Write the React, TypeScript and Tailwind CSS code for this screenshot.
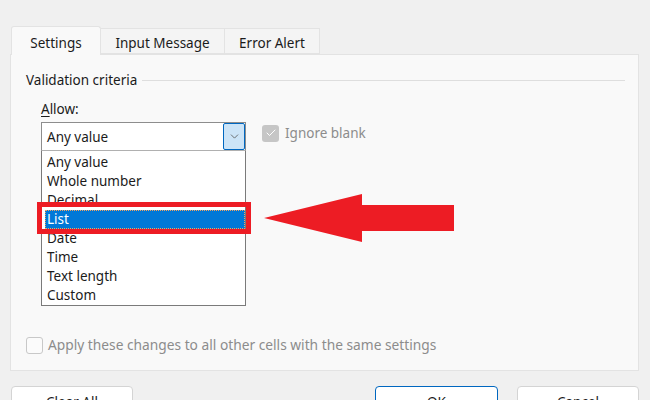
import { Check, ChevronDown } from "lucide-react";

const options = ["Any value", "Whole number", "Decimal", "List", "Date", "Time", "Text length", "Custom"];

export default function App() {
  return (
    <div
      className="relative w-[650px] h-[400px] overflow-hidden bg-[#f0f0f0] pl-[10px] pr-[11px] pt-[26px] text-[13.5px] text-[#1b1b1b]"
      style={{ fontFamily: '"Noto Sans", "Liberation Sans", sans-serif' }}
    >
      {/* tabs */}
      <div className="flex items-end h-[28px] ml-[1px]">
        <div className="relative z-10 -mb-px w-[90px] h-[29px] pt-[6px] text-center leading-[20px] bg-[#f9f9f9] border border-b-0 border-[#e3e3e3] rounded-t-[3px]">
          Settings
        </div>
        <div className="w-[124px] h-[26px] pt-[4px] text-center leading-[20px] bg-[#f4f4f4] border border-l-0 border-[#e3e3e3]">
          Input Message
        </div>
        <div className="w-[95px] h-[26px] pt-[4px] text-center leading-[20px] bg-[#f4f4f4] border border-l-0 border-[#e3e3e3]">
          Error Alert
        </div>
      </div>

      {/* panel */}
      <div className="flex flex-col h-[317px] bg-[#f9f9f9] border border-[#e3e3e3] pl-[15px] pt-[15px] pb-[15px]">
        <div className="flex items-center leading-[20px]">
          <span>Validation criteria</span>
          <div className="flex-1 h-px bg-[#dedede] ml-[5px] mr-[13px]" />
        </div>

        <div className="ml-[15px] mt-[9px] leading-[20px]">
          <span className="underline underline-offset-2">A</span>llow:
        </div>

        <div className="flex items-start ml-[15px] mt-[3px]">
          <div className="w-[205px]">
            <div className="flex items-center h-[29px] bg-white border border-[#8d8d8d] border-b-[#b0b0b0]">
              <span className="flex-1 pl-[5px] pt-px leading-[20px]">Any value</span>
              <div className="flex items-center justify-center w-[22px] h-[27px] bg-[#cce4f7] border border-[#0067c0] rounded-[2px]">
                <ChevronDown size={13} strokeWidth={1.5} className="text-[#555]" />
              </div>
            </div>
            <div className="bg-white border border-t-0 border-[#7a7a7a] pt-[2px]">
              {options.map((o) =>
                o === "List" ? (
                  <div key={o} className="relative ml-[3px] h-[19px] pl-[2px] leading-[19px] bg-[#0078d7] text-white outline-1 outline-dotted outline-[#f4a460] -outline-offset-1">
                    {o}
                    <div className="absolute -left-[8px] -right-[6px] -top-[8px] -bottom-[5px] border-[5px] border-[#ed1c24]" />
                  </div>
                ) : (
                  <div key={o} className="h-[19px] pl-[5px] leading-[19px]">
                    {o}
                  </div>
                )
              )}
            </div>
          </div>

          <div className="flex items-center ml-[16px] mt-[1px]">
            <div className="flex items-center justify-center w-[17px] h-[17px] rounded-[3px] bg-[#c6c6c6]">
              <Check size={12} strokeWidth={2} className="text-white" />
            </div>
            <span className="ml-[6px] leading-[20px] text-[#8c8c8c]">Ignore blank</span>
          </div>
        </div>

        <div className="flex items-center mt-auto">
          <div className="w-[17px] h-[17px] rounded-[3px] border border-[#c8c8c8] bg-[#fbfbfb]" />
          <span className="ml-[5px] leading-[20px] text-[13.75px] text-[#8c8c8c]">Apply these changes to all other cells with the same settings</span>
        </div>
      </div>

      {/* buttons */}
      <div className="flex mt-[15px]">
        <button className="ml-px w-[122px] h-[32px] rounded-[4px] bg-white border border-[#d4d4d4] leading-[20px]">Clear All</button>
        <button className="ml-auto w-[123px] h-[32px] rounded-[4px] bg-white border border-[#0067c0] leading-[20px]">OK</button>
        <button className="ml-[19px] w-[122px] h-[32px] rounded-[4px] bg-white border border-[#d4d4d4] leading-[20px]">Cancel</button>
      </div>

      {/* red arrow */}
      <svg className="absolute left-0 top-0 pointer-events-none" width="650" height="400" viewBox="0 0 650 400">
        <polygon points="264,218 362,194 362,205 454,205 454,231 362,231 362,242" fill="#ed1c24" />
      </svg>
    </div>
  );
}
